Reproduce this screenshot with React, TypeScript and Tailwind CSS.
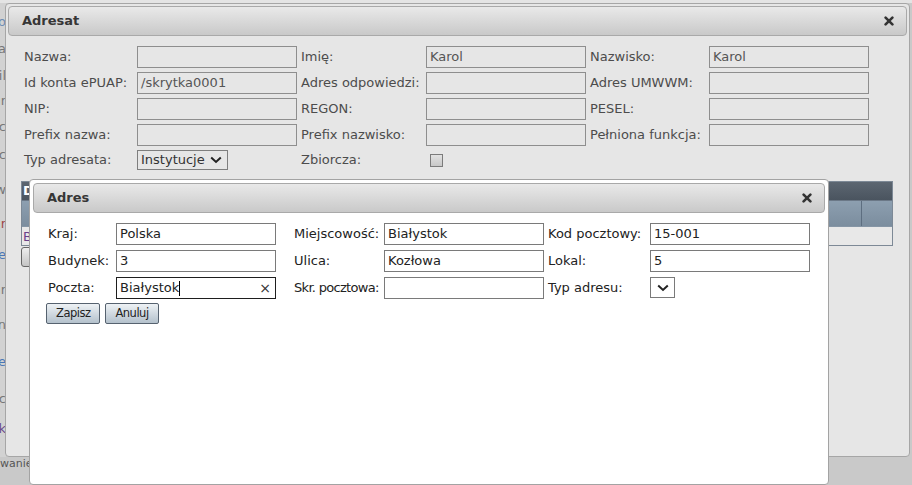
import React from "react";

const adresatRows: [string, string][][] = [
  [["Nazwa:", ""], ["Imię:", "Karol"], ["Nazwisko:", "Karol"]],
  [["Id konta ePUAP:", "/skrytka0001"], ["Adres odpowiedzi:", ""], ["Adres UMWWM:", ""]],
  [["NIP:", ""], ["REGON:", ""], ["PESEL:", ""]],
  [["Prefix nazwa:", ""], ["Prefix nazwisko:", ""], ["Pełniona funkcja:", ""]],
];

const edgeWords = [
  { h: 24, text: "ło", color: "text-[#6d8db3]" },
  { h: 30, text: "ba", color: "text-[#777]" },
  { h: 24, text: "il", color: "text-[#777]" },
  { h: 26, text: "ur", color: "text-[#777]" },
  { h: 26, text: "ac", color: "text-[#777]" },
  { h: 30, text: "ic", color: "text-[#777]" },
  { h: 40, text: "w", color: "text-[#777]" },
  { h: 28, text: "ar", color: "text-[#a04848]" },
  { h: 34, text: "ie", color: "text-[#4a78b6]" },
  { h: 36, text: "ar", color: "text-[#777]" },
  { h: 34, text: "in", color: "text-[#777]" },
  { h: 40, text: "le", color: "text-[#4a78b6]" },
  { h: 34, text: "ac", color: "text-[#777]" },
  { h: 26, text: "ok", color: "text-[#6a4a8a]" },
];

function CloseX() {
  return (
    <svg width="10" height="10" viewBox="0 0 10 10" className="block">
      <path d="M1.6 1.6 L8.4 8.4 M8.4 1.6 L1.6 8.4" stroke="#333" strokeWidth="2.6" strokeLinecap="round" />
    </svg>
  );
}

function Chevron() {
  return (
    <svg width="12" height="8" viewBox="0 0 12 8" className="block">
      <path d="M1.2 1.5 L6 6 L10.8 1.5" fill="none" stroke="#222" strokeWidth="2" />
    </svg>
  );
}

function TitleBar({ title }: { title: string }) {
  return (
    <div className="h-[30px] flex items-center justify-between rounded-[4px] border border-[#a9a9a9] bg-gradient-to-b from-[#e9e9e9] to-[#c9c9c9] pl-[13px] pr-[12px]">
      <span className="text-[13px] font-bold text-[#363636]">{title}</span>
      <CloseX />
    </div>
  );
}

function GrayInput({ value }: { value: string }) {
  return (
    <div className="w-[160px] h-[22px] border border-[#8e8e8e] bg-[#e6e6e6] pl-[3px] flex items-center text-[13px] text-[#555]">
      {value}
    </div>
  );
}

function WhiteInput({ value }: { value: string }) {
  return (
    <div className="w-[160px] h-[22px] border border-[#7a7a7a] bg-white pl-[3px] flex items-center text-[13px] text-[#222]">
      {value}
    </div>
  );
}

function Label({ text, h = "h-[22px]", extra = "" }: { text: string; h?: string; extra?: string }) {
  return <div className={`${h} flex items-center whitespace-nowrap ${extra}`}>{text}</div>;
}

function Btn({ label }: { label: string }) {
  return (
    <button className="h-[21px] px-[9px] rounded-[2px] border border-[#56626f] bg-gradient-to-b from-[#eef2f5] to-[#b4c1cc] text-[11.5px] tracking-[-0.5px] text-[#222]">
      {label}
    </button>
  );
}

export default function App() {
  return (
    <div className="relative w-[912px] h-[485px] overflow-hidden bg-[#c9c9c9] font-['DejaVu_Sans',Verdana,sans-serif]">
      {/* page behind the dialogs */}
      <div className="absolute left-0 top-0 w-[912px] h-[485px] flex flex-col">
        <div className="h-[3px] bg-[#e4e4e4]" />
        <div className="h-[454px] w-[6px] flex flex-col overflow-hidden bg-[#d2d2d2] text-[13px] pt-[7px]">
          {edgeWords.map((w, i) => (
            <div key={i} className={`flex justify-end items-center whitespace-nowrap ${w.color}`} style={{ height: w.h }}>
              {w.text}
            </div>
          ))}
        </div>
        <div className="h-[14px] flex items-center whitespace-nowrap text-[11px] text-[#555]">wanie</div>
      </div>

      {/* Adresat dialog */}
      <div className="absolute left-[5px] top-[3px] w-[905px] h-[454px] rounded-[4px] border border-[#a6a6a6] bg-[#e6e6e6] p-[2px]">
        <TitleBar title="Adresat" />
        <div className="pl-[16px] pt-[10px]">
          <div className="grid grid-cols-[113px_164px_125px_164px_119px_160px] gap-y-[4px] text-[13px] text-[#4c4c4c]">
            {adresatRows.map((row) =>
              row.map(([label, value]) => (
                <React.Fragment key={label}>
                  <Label text={label} />
                  <GrayInput value={value} />
                </React.Fragment>
              ))
            )}
            <Label text="Typ adresata:" h="h-[20px]" />
            <div className="w-[91px] h-[20px] border border-[#7e7e7e] bg-[#e6e6e6] flex items-center justify-between pl-[3px] pr-[5px] text-[#333]">
              <span>Instytucje</span>
              <Chevron />
            </div>
            <Label text="Zbiorcza:" h="h-[20px]" />
            <div className="h-[20px] flex items-center pl-[4px]">
              <div className="w-[13px] h-[13px] border border-[#7b7b7b] bg-gradient-to-b from-[#e2e2e2] to-[#c8c8c8]" />
            </div>
          </div>
        </div>

        {/* grid behind Adres */}
        <div className="ml-[13px] mt-[11px] w-[872px] border border-[#7d8996]">
          <div className="h-[18px] bg-gradient-to-b from-[#5c6671] to-[#4a545f] text-[13px] font-bold text-white pl-[1px] leading-[18px]">D</div>
          <div className="h-[26px] flex border-t border-[#6b7887] bg-gradient-to-b from-[#8d9fb0] to-[#7b8d9e]">
            <div className="flex-1" />
            <div className="w-[31px] border-l border-[#5d6e80]" />
          </div>
          <div className="h-[19px] border-t border-[#8595a5] bg-[#e8e8e8] text-[13px] text-[#6a3f8a] pl-[1px] leading-[19px]">B</div>
        </div>
        <div className="ml-[13px] mt-[1px] w-[40px] h-[20px] rounded-[3px] border border-[#666] bg-gradient-to-b from-[#eeeeee] to-[#c4c4c4]" />
      </div>

      {/* Adres dialog */}
      <div className="absolute left-[29px] top-[179px] w-[800px] h-[306px] rounded-[4px] border border-[#a3a3a3] bg-white px-[3px] pt-[3px]">
        <TitleBar title="Adres" />
        <div className="pl-[13px] pt-[10px]">
          <div className="pl-[2px] grid grid-cols-[68px_178px_90px_164px_102px_160px] gap-y-[5px] text-[13px] text-[#222]">
            <Label text="Kraj:" />
            <WhiteInput value="Polska" />
            <Label text="Miejscowość:" />
            <WhiteInput value="Białystok" />
            <Label text="Kod pocztowy:" />
            <WhiteInput value="15-001" />

            <Label text="Budynek:" />
            <WhiteInput value="3" />
            <Label text="Ulica:" />
            <WhiteInput value="Kozłowa" />
            <Label text="Lokal:" />
            <WhiteInput value="5" />

            <Label text="Poczta:" />
            <div className="w-[160px] h-[22px] border border-[#1e1e1e] bg-white pl-[3px] pr-[4px] flex items-center justify-between">
              <span className="flex items-center">
                Białystok
                <span className="w-px h-[15px] bg-black" />
              </span>
              <span className="text-[14px] text-[#333] leading-none">×</span>
            </div>
            <Label text="Skr. pocztowa:" extra="tracking-[-0.7px]" />
            <WhiteInput value="" />
            <Label text="Typ adresu:" />
            <div className="w-[25px] h-[21px] border border-[#7a7a7a] bg-white flex items-center justify-center">
              <Chevron />
            </div>
          </div>
          <div className="flex gap-[5px] mt-[4px]">
            <Btn label="Zapisz" />
            <Btn label="Anuluj" />
          </div>
        </div>
      </div>
    </div>
  );
}
